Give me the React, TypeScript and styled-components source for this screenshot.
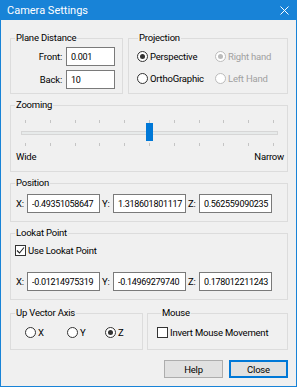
import React from "react";
import styled, { createGlobalStyle } from "styled-components";

const GlobalStyle = createGlobalStyle`
  html, body {
    margin: 0;
    padding: 0;
    background: #ffffff;
  }
  body {
    font-family: Roboto, "Liberation Sans", Arial, sans-serif;
    font-size: 9.5px;
    letter-spacing: -0.2px;
    color: #000;
  }
`;

const Window = styled.div`
  width: 297px;
  height: 387px;
  box-sizing: border-box;
  border: 1px solid #1883d7;
  background: #f0f0f0;
  display: flex;
  flex-direction: column;
`;

const TitleBar = styled.div`
  height: 20px;
  background: #1883d7;
  color: #fff;
  display: flex;
  align-items: center;
  justify-content: space-between;
  padding: 0 7px 0 6px;
  font-size: 11px;
  letter-spacing: 0;
`;

const CloseIcon = styled.svg`
  width: 9px;
  height: 9px;
`;

const Body = styled.div`
  flex: 1;
  display: flex;
  flex-direction: column;
  gap: 5px;
  padding: 12px 8px 8px 9px;
`;

const Row = styled.div<{ $gap?: number; $top?: number }>`
  display: flex;
  gap: ${({ $gap }) => $gap ?? 5}px;
  margin-top: ${({ $top }) => $top ?? 0}px;
`;

const Group = styled.fieldset<{ $width?: number; $pad?: string }>`
  margin: 0;
  min-width: 0;
  box-sizing: border-box;
  border: 1px solid #dcdcdc;
  padding: ${({ $pad }) => $pad ?? "0"};
  ${({ $width }) => ($width ? `width: ${$width}px; flex: none;` : "flex: 1;")}
`;

const Legend = styled.legend`
  padding: 0 1px;
  margin-left: 4px;
  line-height: 12px;
`;

const FormGrid = styled.div`
  display: grid;
  grid-template-columns: 1fr 49px;
  grid-auto-rows: 19px;
  row-gap: 4px;
  column-gap: 4px;
  align-items: center;
`;

const FieldLabel = styled.label`
  text-align: right;
`;

const TextInput = styled.input<{ $width?: number }>`
  box-sizing: border-box;
  width: ${({ $width }) => $width ?? 49}px;
  height: 19px;
  border: 1px solid #7a7a7a;
  background: #fff;
  font-family: inherit;
  font-size: 9px;
  letter-spacing: -0.3px;
  padding: 0 0 0 4px;
  margin: 0;
  color: #000;
  outline: none;
`;

const OptionGrid = styled.div`
  display: grid;
  grid-template-columns: 78px auto;
  grid-auto-rows: 19px;
  row-gap: 3px;
  align-items: center;
  padding-left: 3px;
`;

const Option = styled.span<{ $disabled?: boolean }>`
  display: flex;
  align-items: center;
  gap: 2px;
  color: ${({ $disabled }) => ($disabled ? "#a0a0a0" : "#000")};
  white-space: nowrap;
`;

const RadioCircle = styled.span<{ $checked?: boolean; $disabled?: boolean }>`
  box-sizing: border-box;
  width: 11px;
  height: 11px;
  border-radius: 50%;
  border: 1px solid ${({ $disabled }) => ($disabled ? "#bcbcbc" : "#333")};
  background: #fff;
  display: flex;
  align-items: center;
  justify-content: center;
  flex: none;

  &::after {
    content: "";
    width: 5px;
    height: 5px;
    border-radius: 50%;
    background: ${({ $disabled }) => ($disabled ? "#bcbcbc" : "#333")};
    display: ${({ $checked }) => ($checked ? "block" : "none")};
  }
`;

const CheckBox = styled.span`
  box-sizing: border-box;
  width: 11px;
  height: 11px;
  border: 1px solid #333;
  background: #fff;
  display: flex;
  align-items: center;
  justify-content: center;
  flex: none;
`;

const SliderTrackArea = styled.div`
  position: relative;
  height: 30px;
  display: flex;
  flex-direction: column;
`;

const TickRow = styled.div<{ $top: number }>`
  display: flex;
  justify-content: space-between;
  padding: 0 13px 0 14px;
  height: 3px;
  margin-top: ${({ $top }) => $top}px;
`;

const Tick = styled.span`
  width: 1px;
  height: 3px;
  background: #c4c4c4;
`;

const Track = styled.div`
  margin: 8px 9px 0 10px;
  height: 4px;
  box-sizing: border-box;
  background: #e7eaea;
  border: 1px solid #d6d6d6;
`;

const Thumb = styled.div`
  position: absolute;
  top: 6px;
  width: 7px;
  height: 18px;
  background: #0078d7;
`;

const SliderLabels = styled.div`
  display: flex;
  justify-content: space-between;
  padding: 0 3px 0 5px;
  margin-top: 4px;
  line-height: 12px;
`;

const CoordRow = styled.div`
  display: flex;
  gap: 2px;
  padding-left: 5px;
`;

const CoordField = styled.div`
  display: flex;
  align-items: center;
`;

const CoordLabel = styled.span`
  width: 11px;
`;

const CheckRow = styled.div<{ $indent?: number }>`
  display: flex;
  align-items: center;
  gap: 2px;
  height: 13px;
  padding-left: ${({ $indent }) => $indent ?? 4}px;
`;

const Spacer = styled.div`
  height: 15px;
`;

const AxisRow = styled.div`
  display: grid;
  grid-template-columns: 42px 38px auto;
  height: 13px;
  align-items: center;
  padding-left: 14px;
`;

const ButtonBar = styled.div`
  display: flex;
  justify-content: flex-end;
  gap: 6px;
  margin-top: 5px;
`;

const Button = styled.button<{ $primary?: boolean }>`
  box-sizing: border-box;
  width: 59px;
  height: 18px;
  background: #e1e1e1;
  border: ${({ $primary }) => ($primary ? "2px solid #0078d7" : "1px solid #adadad")};
  font-family: inherit;
  font-size: 9.5px;
  letter-spacing: -0.2px;
  color: #000;
  padding: 0;
  margin: 0;
`;

const ticks = Array.from({ length: 11 });
const zoomValue = 5;

const Coords = ({ values }: { values: string[] }) => (
  <CoordRow>
    {["X:", "Y:", "Z:"].map((axis, i) => (
      <CoordField key={axis}>
        <CoordLabel>{axis}</CoordLabel>
        <TextInput $width={73} defaultValue={values[i]} readOnly />
      </CoordField>
    ))}
  </CoordRow>
);

const App = () => {
  const thumbLeft = 14 + (248 * zoomValue) / 10 - 3.5;

  return (
    <>
      <GlobalStyle />
      <Window>
        <TitleBar>
          <span>Camera Settings</span>
          <CloseIcon viewBox="0 0 9 9">
            <path d="M0.5 0.5 L8.5 8.5 M8.5 0.5 L0.5 8.5" stroke="#fff" strokeWidth="1" />
          </CloseIcon>
        </TitleBar>
        <Body>
          <Row>
            <Group $width={113} $pad="3px 7px 4px 0">
              <Legend>Plane Distance</Legend>
              <FormGrid>
                <FieldLabel>Front:</FieldLabel>
                <TextInput defaultValue="0.001" readOnly />
                <FieldLabel>Back:</FieldLabel>
                <TextInput defaultValue="10" readOnly />
              </FormGrid>
            </Group>
            <Group $pad="3px 0 4px 5px">
              <Legend>Projection</Legend>
              <OptionGrid>
                <Option>
                  <RadioCircle $checked />
                  Perspective
                </Option>
                <Option $disabled>
                  <RadioCircle $checked $disabled />
                  Right hand
                </Option>
                <Option>
                  <RadioCircle />
                  OrthoGraphic
                </Option>
                <Option $disabled>
                  <RadioCircle $disabled />
                  Left Hand
                </Option>
              </OptionGrid>
            </Group>
          </Row>

          <Group $pad="6px 0 8px 0">
            <Legend>Zooming</Legend>
            <SliderTrackArea>
              <TickRow $top={3}>
                {ticks.map((_, i) => (
                  <Tick key={i} />
                ))}
              </TickRow>
              <Track />
              <TickRow $top={8}>
                {ticks.map((_, i) => (
                  <Tick key={i} />
                ))}
              </TickRow>
              <Thumb style={{ left: thumbLeft }} />
            </SliderTrackArea>
            <SliderLabels>
              <span>Wide</span>
              <span>Narrow</span>
            </SliderLabels>
          </Group>

          <Group $pad="5px 0 8px 0">
            <Legend>Position</Legend>
            <Coords values={["-0.49351058647", "1.318601801117", "0.562559090235"]} />
          </Group>

          <Group $pad="5px 0 8px 0">
            <Legend>Lookat Point</Legend>
            <CheckRow>
              <CheckBox>
                <svg width="9" height="9" viewBox="0 0 9 9">
                  <path d="M1 4.5 L3.5 7 L8 1.5" stroke="#222" strokeWidth="1.1" fill="none" />
                </svg>
              </CheckBox>
              Use Lookat Point
            </CheckRow>
            <Spacer />
            <Coords values={["-0.01214975319", "-0.14969279740", "0.178012211243"]} />
          </Group>

          <Row $gap={4} $top={2}>
            <Group $width={133} $pad="7px 0 10px 0">
              <Legend>Up Vector Axis</Legend>
              <AxisRow>
                <Option>
                  <RadioCircle />X
                </Option>
                <Option>
                  <RadioCircle />Y
                </Option>
                <Option>
                  <RadioCircle $checked />Z
                </Option>
              </AxisRow>
            </Group>
            <Group $pad="7px 0 10px 9px">
              <Legend>Mouse</Legend>
              <CheckRow $indent={0}>
                <CheckBox />
                Invert Mouse Movement
              </CheckRow>
            </Group>
          </Row>

          <ButtonBar>
            <Button>Help</Button>
            <Button $primary>Close</Button>
          </ButtonBar>
        </Body>
      </Window>
    </>
  );
};

export default App;
